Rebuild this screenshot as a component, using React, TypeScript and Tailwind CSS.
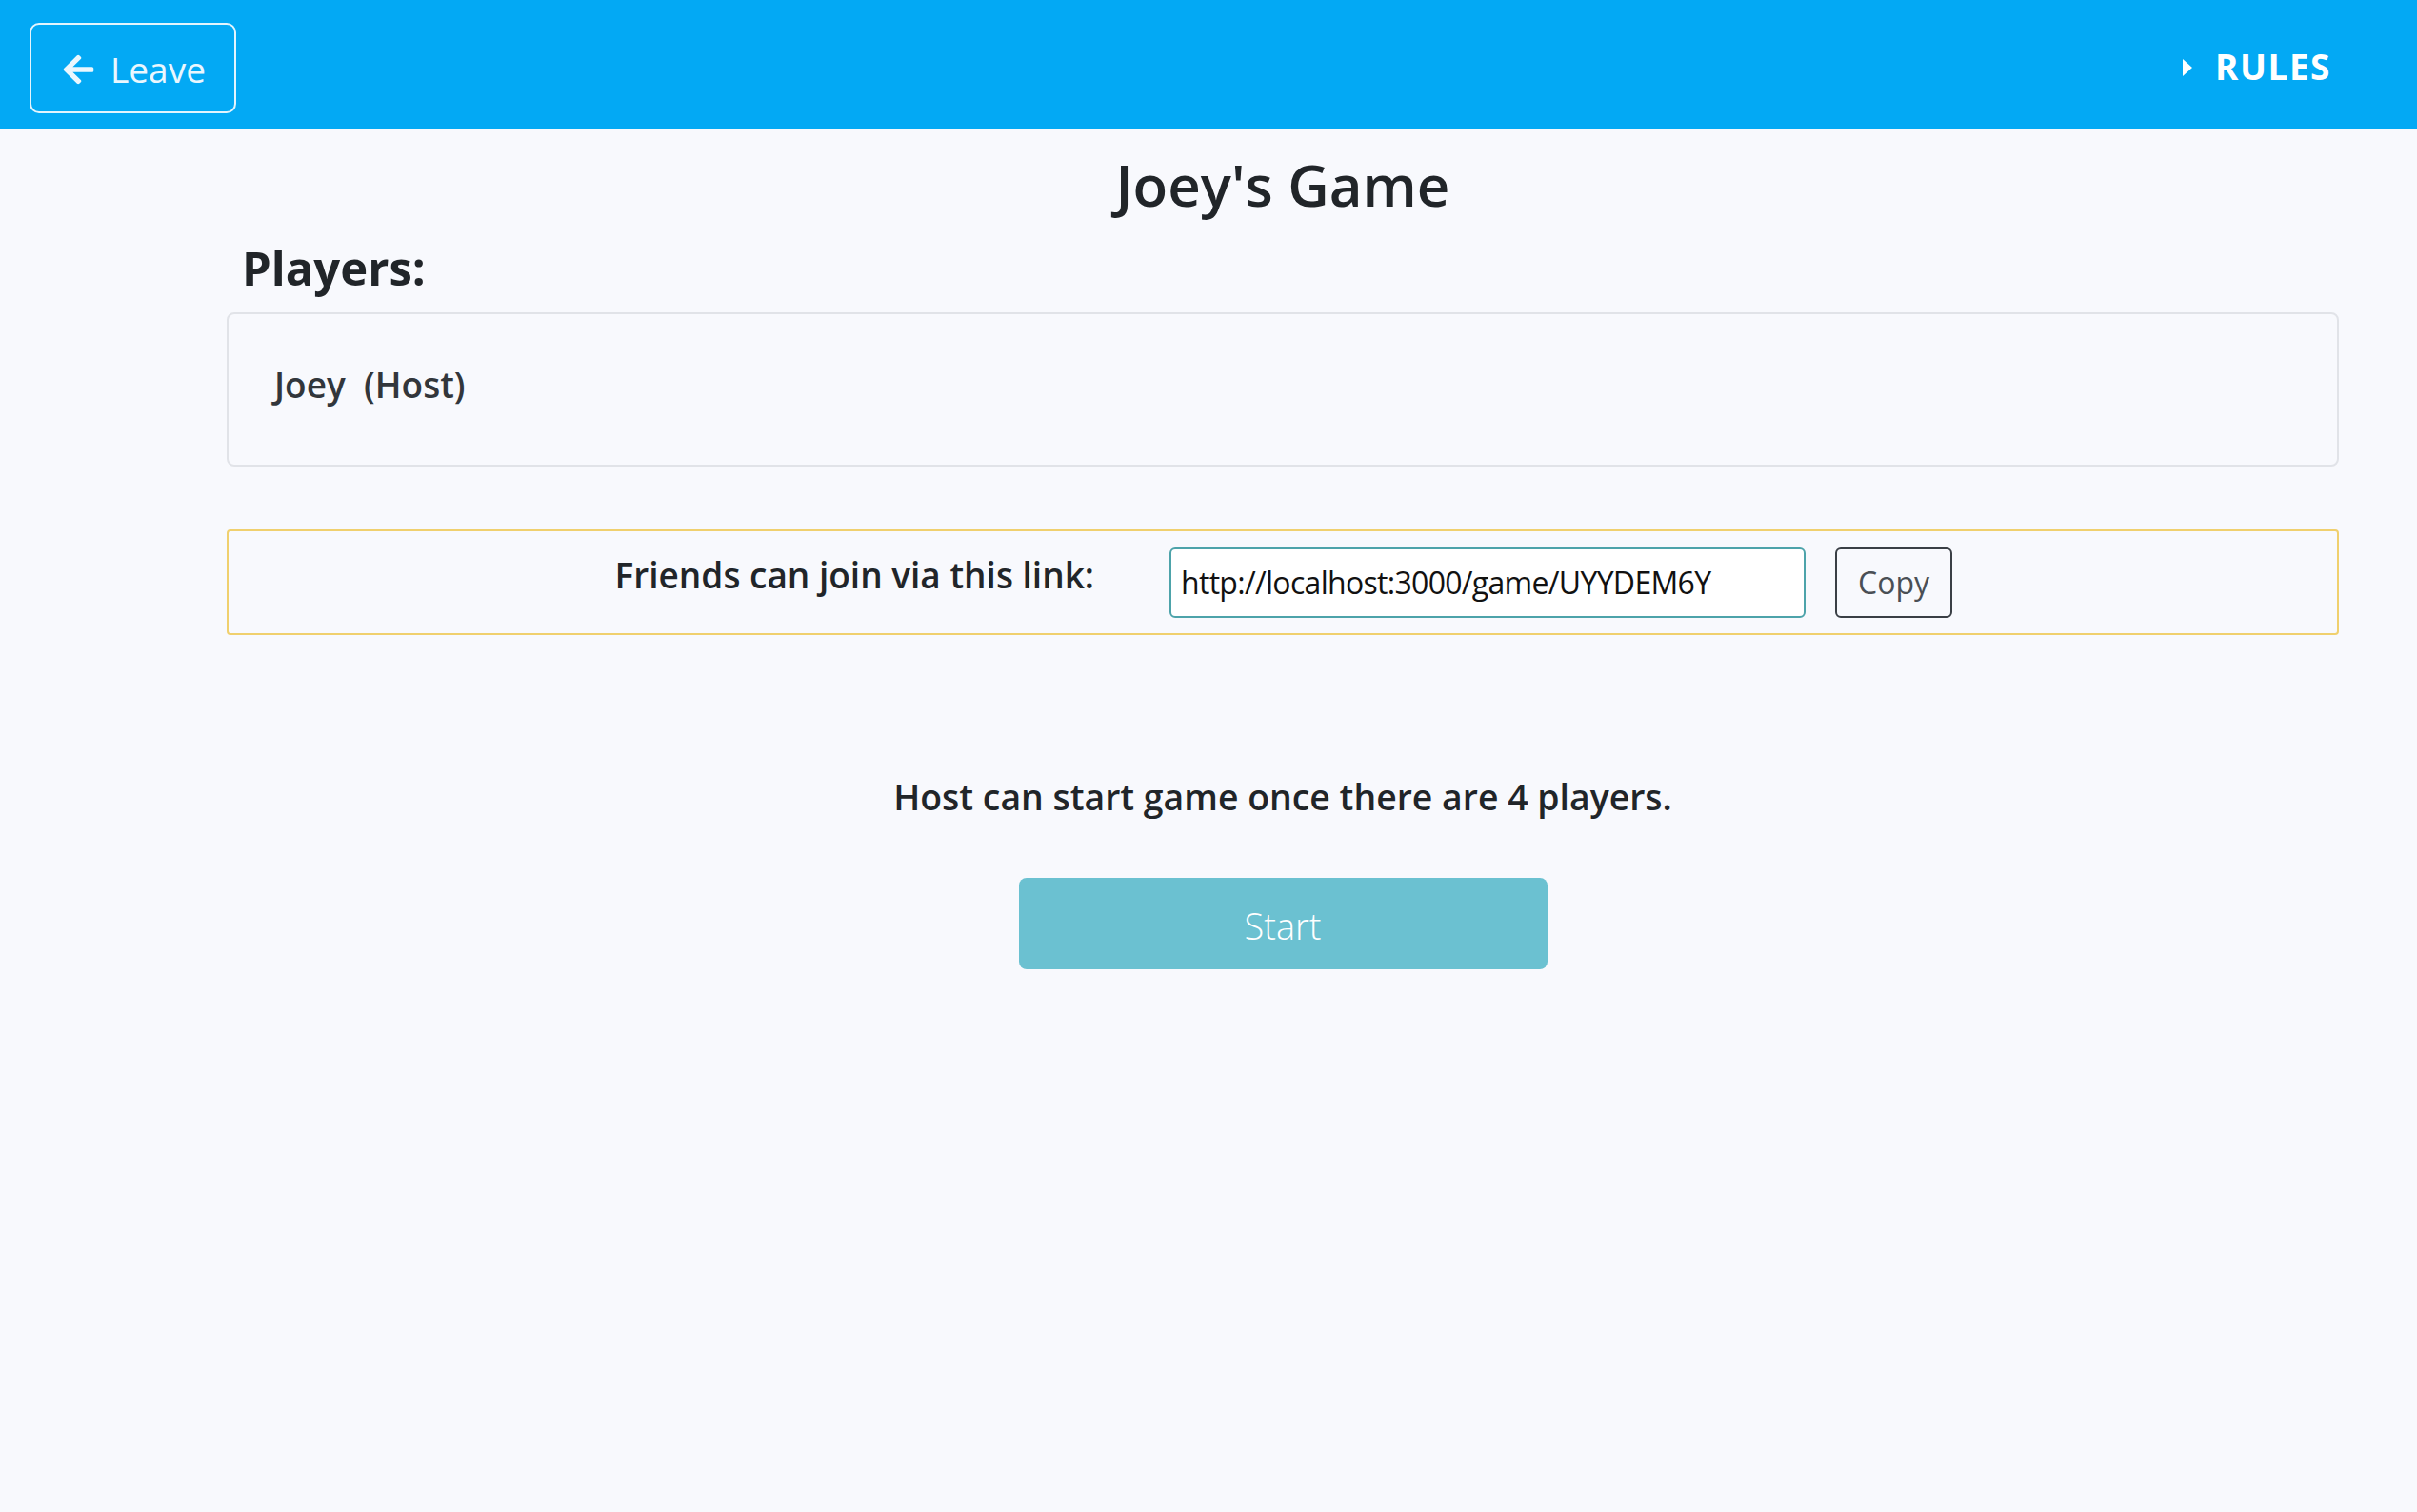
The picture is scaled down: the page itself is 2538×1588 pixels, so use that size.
export default function App() {
  return (
    <div className="min-h-screen w-full bg-[#f8f9fd] font-['Open_Sans',sans-serif] text-[#212529]">
      {/* Header */}
      <header className="h-[136px] bg-[#03a9f4] flex items-start justify-between pl-[31px] pr-[90px]">
        <button className="mt-[24px] h-[95px] w-[217px] border-2 border-[#e3f4fd] rounded-[10px] flex items-center pl-[33px] text-[#eaf7fe]">
          <svg viewBox="0 0 448 512" className="w-[33px] h-[36px] mt-[2px]" fill="currentColor">
            <path d="M257.5 445.1l-22.2 22.2c-9.4 9.4-24.6 9.4-33.9 0L7 273c-9.4-9.4-9.4-24.6 0-33.9L201.4 44.7c9.4-9.4 24.6-9.4 33.9 0l22.2 22.2c9.5 9.5 9.3 25-.4 34.3L136.6 216H424c13.3 0 24 10.7 24 24v32c0 13.3-10.7 24-24 24H136.6l120.5 114.8c9.8 9.3 10 24.8.4 34.3z" />
          </svg>
          <span className="ml-[17px] text-[37px] leading-none font-normal mt-[2px]">Leave</span>
        </button>
        <div className="h-[138px] flex items-center text-white">
          <svg viewBox="0 0 10 18" className="w-[10px] h-[18px] mt-[4px]" fill="currentColor">
            <polygon points="0,0 10,9 0,18" />
          </svg>
          <span className="ml-[24px] text-[37px] leading-none font-bold tracking-[1.5px]">RULES</span>
        </div>
      </header>

      {/* Content */}
      <main className="ml-[238px] w-[2218px]">
        <div className="h-[116px] flex items-center justify-center">
          <h1 className="text-[60px] leading-none font-semibold">Joey's Game</h1>
        </div>
        <div className="h-[59px] flex items-center pl-[16px]">
          <h2 className="text-[49px] leading-none font-bold">Players:</h2>
        </div>

        <div className="mt-[17px] h-[162px] border-2 border-[#e1e3e8] rounded-[8px] pl-[48px] pt-[54px]">
          <div className="text-[37px] leading-[40px] font-semibold text-[#32363b] whitespace-pre">{"Joey  (Host)"}</div>
        </div>

        <div className="mt-[66px] h-[111px] border-2 border-[#f0d06e] rounded-[4px] flex items-center">
          <div className="w-[909px] text-right pb-[14px]">
            <span className="text-[37px] leading-none font-semibold">Friends can join via this link:</span>
          </div>
          <div className="ml-[79px] w-[668px] h-[74px] bg-white border-2 border-[#4da3aa] rounded-[6px] flex items-center pl-[10px]">
            <span className="text-[32px] leading-none text-[#111] tracking-[-0.7px]">http://localhost:3000/game/UYYDEM6Y</span>
          </div>
          <button className="ml-[31px] w-[123px] h-[74px] border-2 border-[#3a3f45] rounded-[6px] flex items-center justify-center text-[32px] leading-none text-[#4a4f55]">
            Copy
          </button>
        </div>

        <div className="mt-[151px] flex justify-center">
          <p className="text-[37.4px] leading-none font-semibold">Host can start game once there are 4 players.</p>
        </div>

        <div className="mt-[67px] flex justify-center">
          <button className="w-[555px] h-[96px] bg-[#6bc1d1] rounded-[8px] flex items-center justify-center text-white text-[38px] leading-none font-light pt-[4px]">
            Start
          </button>
        </div>
      </main>
    </div>
  );
}
